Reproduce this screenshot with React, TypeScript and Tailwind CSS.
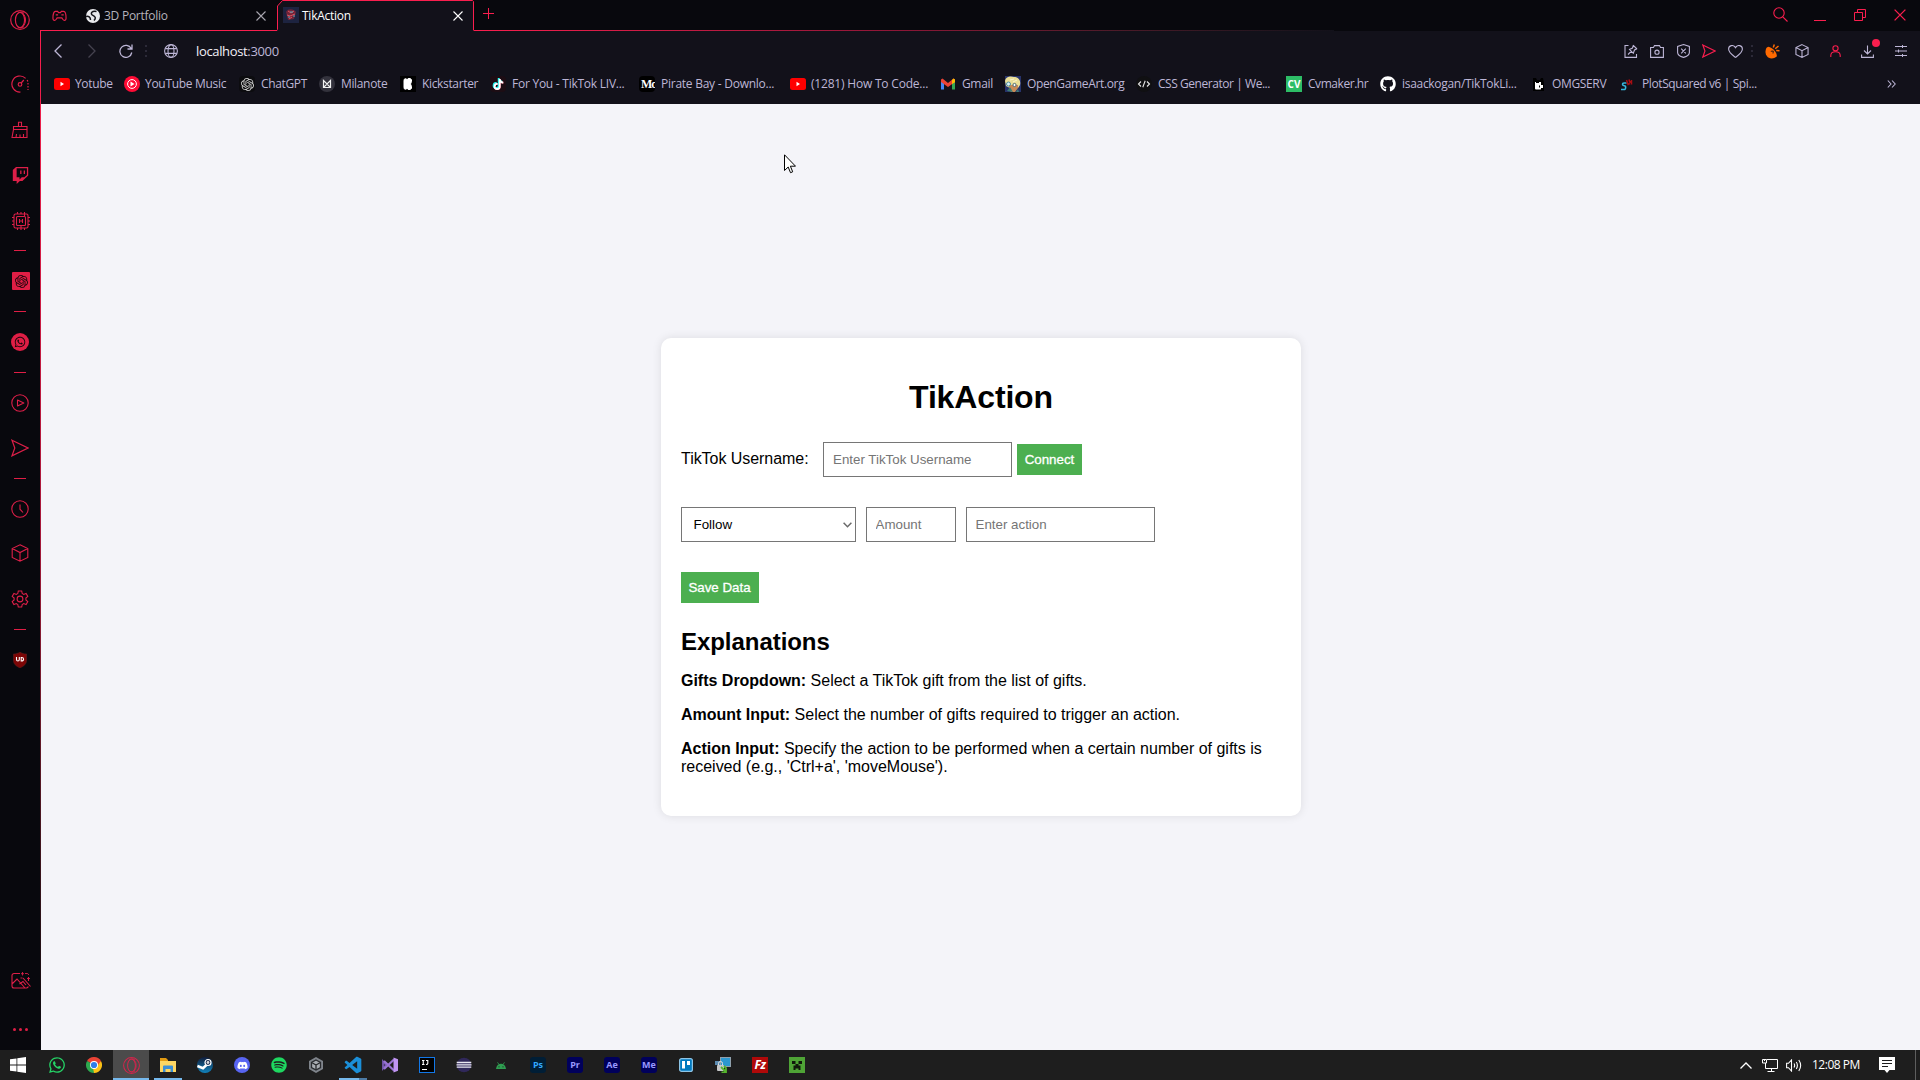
import React from "react";
import { FaWhatsapp, FaTwitch, FaTiktok, FaGithub, FaDiscord, FaSpotify } from "react-icons/fa6";
import { SiOpenai } from "react-icons/si";
import { BiLogoVisualStudio } from "react-icons/bi";

type IconProps = { w?: number; h?: number; vb?: string; sw?: number; className?: string; children: React.ReactNode };

/** Outline icon drawn with the current text colour. */
function Line({ w = 18, h, vb = "0 0 18 18", sw = 1.1, className = "", children }: IconProps) {
  return (
    <svg
      width={w}
      height={h ?? w}
      viewBox={vb}
      fill="none"
      stroke="currentColor"
      strokeWidth={sw}
      className={"block shrink-0 " + className}
    >
      {children}
    </svg>
  );
}

const OperaRing = ({ size = 20 }: { size?: number }) => (
  <Line w={size} vb="0 0 20 20" sw={1.2}>
    <circle cx="10" cy="10" r="9.3" />
    <ellipse cx="10" cy="10" rx="4.6" ry="7.6" />
    <path d="M7.5 3.6C9 2 12 1.600 14 3.300M7.500 16.400C9 18 12 18.400 14 16.700M12.500 3.200c4 3 4 10.600 0 13.600" strokeWidth="1" />
  </Line>
);

const Cube = ({ size = 18 }: { size?: number }) => (
  <Line w={size} sw={size < 18 ? 1.4 : 1.1}>
    <path d="M9 .8L16.800 4.600V13.400L9 17.200L1.200 13.400V4.600ZM1.200 4.600L9 8.600L16.800 4.600M9 8.600V17.200" />
  </Line>
);

const SendIcon = ({ size = 18 }: { size?: number }) => (
  <Line w={size} sw={size < 18 ? 1.5 : 1.2}>
    <path d="M1 1.200L17 9L1 16.800L3.800 9Z" />
  </Line>
);

const Dash = () => <div className="h-px w-3 bg-[#e01e45]" />;

function Sidebar() {
  return (
    <aside className="flex h-[1050px] w-10 shrink-0 flex-col bg-[#08080d] text-[#dd1f48]">
      <div className="flex h-[39px] items-center justify-center"><OperaRing /></div>
      <div className="mt-[22px] flex h-[46px] items-center justify-center pr-px">
        <Line sw={1.2}>
          <path d="M14.600 3.400A8 8 0 1 0 9.500 17M10.200 8L12.800 5" />
          <path d="M17 8v7" strokeDasharray="1.500 1.500" />
          <path d="M16.800 6.500L16.200 5" />
          <circle cx="9" cy="9.400" r="1.800" />
        </Line>
      </div>
      <div className="flex h-[46px] items-center justify-center">
        <Line>
          <path d="M7.500 5.500V1.200h3v4.300M2.500 5.500h13.500v3H2.500ZM2.500 8.500L1 16.500h15V8.500M5 16.500l.5-3.500M9 16.500v-3M12.500 16.500v-3.500" />
        </Line>
      </div>
      <div className="flex h-[45px] items-center justify-center"><FaTwitch size={17} /></div>
      <div className="flex h-[46px] items-center justify-center pl-0.5">
        <Line>
          <rect x="2" y="2" width="14" height="14" rx="1.500" />
          <rect x="4.500" y="4.500" width="9" height="9" rx="1" />
          <path d="M7.500 7v4M10.500 7v4M7.500 9h3M5.500 2V0M9 2V0M12.500 4.500V0M5.500 18v-2M9 18v-4M12.500 18v-2M0 5.500h2M0 9h2M0 12.500h2M16 5.500h2M16 9h2M16 12.500h2" />
        </Line>
      </div>
      <div className="flex h-[13px] items-center justify-center"><Dash /></div>
      <div className="flex h-12 items-center justify-center pl-0.5">
        <div className="flex size-[18px] items-center justify-center rounded-[1px] bg-[#e01e45] text-[#1a060c]"><SiOpenai size={13} /></div>
      </div>
      <div className="flex h-3 items-center justify-center"><Dash /></div>
      <div className="flex h-[50px] items-center justify-center">
        <div className="flex size-[18px] items-center justify-center rounded-full bg-[#e01e45] text-[#1a060c]"><FaWhatsapp size={12} /></div>
      </div>
      <div className="flex h-2.5 items-center justify-center"><Dash /></div>
      <div className="flex h-[51px] items-center justify-center pr-px">
        <Line><circle cx="9" cy="9" r="8.200" /><path d="M6.500 6L12.800 9L6.500 12Z" strokeLinejoin="round" /></Line>
      </div>
      <div className="flex h-10 items-center justify-center pr-px"><SendIcon /></div>
      <div className="flex h-5 items-center justify-center"><Dash /></div>
      <div className="flex h-[41px] items-center justify-center pr-px">
        <Line><circle cx="9" cy="9" r="8.200" /><path d="M9 4.500V9.200L12 12.500" /></Line>
      </div>
      <div className="flex h-12 items-center justify-center pr-px"><Cube /></div>
      <div className="flex h-[43px] items-center justify-center pr-px">
        <Line>
          <circle cx="9" cy="9" r="2.900" />
          <path d="M7.300 1h3.400l.5 2.500 1.500.9 2.400-.9 1.700 2.900-1.900 1.700v1.800l1.900 1.700-1.700 2.900-2.400-.9-1.500.9-.5 2.500H7.300l-.5-2.500-1.500-.9-2.400.9-1.700-2.900 1.900-1.700V8.100L1.200 6.400l1.700-2.900 2.400.9 1.500-.9Z" />
        </Line>
      </div>
      <div className="flex h-[18px] items-center justify-center"><Dash /></div>
      <div className="flex h-11 items-center justify-center">
        <svg width="14" height="16" viewBox="0 0 14 16" className="block">
          <path d="M7 0C9 1.500 11 2 13.600 2V8C13.600 12 11 14 7 16C3 14 .4 12 .4 8V2C3 2 5 1.500 7 0Z" fill="#7d0606" stroke="#5b2020" strokeWidth=".6" />
          <path d="M3.500 5v2.500q0 1.500 1.400 1.500T6.300 7.500V5" fill="none" stroke="#fff" strokeWidth="1.100" />
          <path d="M8.200 5.500v3.500h.6a1.750 1.750 0 0 0 0-3.500Z" fill="none" stroke="#fff" strokeWidth="1.100" />
        </svg>
      </div>
      <div className="flex-1" />
      <div className="flex h-10 items-center justify-center pl-0.5">
        <Line w={20} vb="0 0 20 18" h={18} className="relative top-px">
          <path d="M9 1.500H3A2 2 0 0 0 1 3.500V14A2 2 0 0 0 3 16H15.500A2 2 0 0 0 17.300 14.500M1 12L6 7L14 16M8.500 12L12 9.500L15 13M12 6L19.500 14.500M17.500 9V5" />
          <path d="M11.500 0v3.500M10 1.700h3M14 1.500h2.500a1.500 1.500 0 0 1 1 1.500M9.500 6h2M16 6.500h3" strokeWidth=".9" />
        </Line>
      </div>
      <div className="mt-[19px] flex h-6 items-center justify-center gap-[3px] pb-[3px]">
        <i className="size-[3px] rounded-full bg-[#e01e45]" />
        <i className="size-[3px] rounded-full bg-[#e01e45]" />
        <i className="size-[3px] rounded-full bg-[#e01e45]" />
      </div>
      <div className="h-[7px]" />
    </aside>
  );
}

const Cross = ({ size = 10, className = "" }: { size?: number; className?: string }) => (
  <Line w={size} vb="0 0 10 10" className={className}><path d="M.5 .5L9.500 9.500M9.500 .5L.5 9.500" /></Line>
);

function TabStrip() {
  return (
    <div className="relative flex h-[31px] w-full bg-[#08080d]">
      <div className="flex h-[31px] w-9 items-center justify-center text-[#dd1f48]">
        <Line w={15} h={12} vb="0 0 16 12" sw={1.3}>
          <path d="M3.500 1H6L7 2.300H9L10 1H12.500C14 1 15 4.500 15 8.500C15 11 12.800 11.500 11.500 9.500L10.500 8H5.500L4.500 9.500C3.200 11.500 1 11 1 8.500C1 4.500 2 1 3.500 1Z" />
          <path d="M4 4.700h2.500M10 4.700h2.500" />
        </Line>
      </div>
      <div className="flex h-[31px] w-[200px] items-center pl-[9px]">
        <svg width="14" height="14" viewBox="0 0 14 14" className="block">
          <circle cx="7" cy="7" r="7" fill="#e8e9ec" />
          <path d="M10.500 2.500C6 1.500 4 4.500 6.500 6.200C9 7.500 10.500 8.500 8 11.500M0 7.500C2.500 6.500 4.500 8.500 4.500 11" fill="none" stroke="#15151b" strokeWidth="1.500" />
        </svg>
        <span className="ml-1 w-[152px] whitespace-nowrap text-[12px] tracking-[-0.25px] text-[#b5b3bb]">3D Portfolio</span>
        <Cross className="text-[#a9a7b0]" />
      </div>
      <div className="relative flex h-[31px] w-[197px] items-center pl-1.5">
        <svg width="198" height="31" viewBox="0 0 198 31" className="absolute left-0 top-0 block">
          <path d="M.5 31V6L5.500 .5H196.500V31Z" fill="#12111a" />
          <path d="M0 30.500L.5 29.500V6L5.500 .5H195.500L196.500 1.500V30.500" fill="none" stroke="#fa1e4e" />
        </svg>
        <svg width="16" height="16" viewBox="0 0 16 16" className="relative -top-px block">
          <rect width="16" height="16" fill="#1d2340" />
          <path d="M3 5C5 1 11 2 13 5L11 12L5 13Z" fill="#6f2439" />
          <path d="M5 4L8 6L11 4M4 8L7 9L12 7M6 12L9 10" stroke="#e0525e" fill="none" />
          <path d="M7 5h3M5 10h2M10 9h2" stroke="#53a8c0" />
        </svg>
        <span className="relative ml-[3px] w-[151px] whitespace-nowrap text-[12px] tracking-[-0.25px] text-white">TikAction</span>
        <Cross className="relative text-white" />
      </div>
      <div className="flex h-[27px] w-7 items-center justify-center text-[#fa1e4e]">
        <Line w={11} vb="0 0 11 11" sw={1}><path d="M5.500 0V11M0 5.500H11" /></Line>
      </div>
      <div className="flex-1" />
      <div className="flex h-[30px] w-40 text-[#fa1e4e]">
        <div className="flex w-10 items-center justify-center pb-0.5">
          <Line w={15} vb="0 0 15 15" sw={1.1}><circle cx="6" cy="6" r="5.200" /><path d="M9.800 9.800L14.500 14.500" /></Line>
        </div>
        <div className="flex w-10 items-center justify-center pt-[11px]"><div className="h-px w-3 bg-[#fa1e4e]" /></div>
        <div className="flex w-10 items-center justify-center">
          <Line w={12} vb="0 0 12 12" sw={1}><path d="M.5 3.500h8v8h-8ZM3.500 3.500V.5h8v8H8.500" /></Line>
        </div>
        <div className="flex w-10 items-center justify-center"><Cross size={12} /></div>
      </div>
      <div className="absolute bottom-0 left-0 h-px w-[236px] bg-[#fa1e4e]" />
      <div className="absolute bottom-0 left-[433px] h-px w-[860px] bg-gradient-to-r from-[#fa1e4e] via-[#8b1636] to-[#12111a]" />
    </div>
  );
}

const Dots = () => (
  <div className="flex flex-col gap-[3px]">
    <i className="block size-0.5 bg-[#2c2a38]" />
    <i className="block size-0.5 bg-[#2c2a38]" />
    <i className="block size-0.5 bg-[#2c2a38]" />
  </div>
);

function Toolbar() {
  return (
    <div className="flex h-10 items-center text-[#bdb6d6]">
      <div className="flex w-[34px] justify-center"><Line w={8} h={14} vb="0 0 8 14" sw={1.3}><path d="M7.500 .5L1 7L7.500 13.500" /></Line></div>
      <div className="flex w-[34px] justify-center text-[#45424f]"><Line w={8} h={14} vb="0 0 8 14" sw={1.3}><path d="M.5 .5L7 7L.5 13.500" /></Line></div>
      <div className="flex w-[33px] justify-center">
        <Line w={14} vb="0 0 14 14" sw={1.3}><path d="M12.200 4.500A6 6 0 1 0 12.800 8.500M13 .5V5H8.500" /></Line>
      </div>
      <div className="flex w-2 justify-center"><Dots /></div>
      <div className="flex w-[41px] justify-center">
        <Line w={14} vb="0 0 14 14"><circle cx="7" cy="7" r="6.400" /><ellipse cx="7" cy="7" rx="3" ry="6.400" /><path d="M1.300 4.600H12.700M1.300 9.400H12.700" /></Line>
      </div>
      <span className="ml-[5px] whitespace-nowrap pt-0.5 text-[13px] tracking-[-0.35px]">
        <span className="text-[#f2f0f8]">localhost</span>:3000
      </span>
      <div className="flex-1" />
      <div className="flex w-[26px] justify-center">
        <Line w={14} vb="0 0 14 14"><path d="M4.500 1.500H1V13.400H12.500V10M9 1.200L13 5M9.300 1.500L8.500 4L5.500 5.500L9.300 9.300L10.500 6L13 4.700M7.200 7.400L4 10.500" /></Line>
      </div>
      <div className="flex w-[26px] justify-center">
        <Line w={14} h={13} vb="0 0 14 13"><path d="M.6 2.500H3.500L4.500 .6H9.500L10.500 2.500H13.400V12.400H.6Z" /><circle cx="7" cy="7.200" r="2.100" /></Line>
      </div>
      <div className="flex w-[26px] justify-center">
        <Line w={13} h={14} vb="0 0 13 14"><path d="M6.500 .6L12.400 2.500V8.500C12.400 11 9.500 12.500 6.500 13.400C3.500 12.500 .6 11 .6 8.500V2.500ZM4.200 4.700L8.800 9.300M8.800 4.700L4.200 9.300" /></Line>
      </div>
      <div className="flex w-[26px] justify-center text-[#fa1e4e]"><SendIcon size={14} /></div>
      <div className="flex w-[26px] justify-center">
        <Line w={15} h={13} vb="0 0 15 13"><path d="M7.500 12.400C4 9.800 .6 7.500 .6 4C.6 .3 5.500 -.8 7.500 2.600C9.500 -.8 14.400 .3 14.400 4C14.400 7.500 11 9.800 7.500 12.400Z" /></Line>
      </div>
      <div className="flex w-2 justify-center"><Dots /></div>
      <div className="flex w-[29px] justify-center pl-[3px]">
        <svg width="15" height="15" viewBox="0 0 15 15" className="block">
          <path d="M1.800 3.500C-1 7.500 .8 14.500 6.500 14.500C9 14.500 11 13.500 11.800 12Z" fill="#ff6a00" />
          <ellipse cx="6.800" cy="7.800" rx="2.800" ry="6.500" transform="rotate(-45 6.800 7.800)" fill="#ff6a00" />
          <path d="M5.800 7.300L8.300 7L8 9.500" fill="none" stroke="#12111a" strokeWidth=".9" />
          <path d="M8.300 3.500L9.300 .5M10.200 4.800L13.500 2M11.200 6.600L14.500 6.800" stroke="#ff6a00" strokeWidth="1.500" />
        </svg>
      </div>
      <div className="flex w-[33px] justify-center"><Cube size={14} /></div>
      <div className="flex w-[34px] justify-center text-[#fa1e4e]">
        <Line w={11} h={12} vb="0 0 11 12"><circle cx="5.500" cy="3.300" r="2.600" /><path d="M.8 12V10.500C.8 8 3 6.800 5.500 6.800S10.200 8 10.200 10.500V12" /></Line>
      </div>
      <div className="relative flex w-[31px] justify-center">
        <Line w={13} h={13} vb="0 0 13 13"><path d="M6.500 .5V8.500M3 5.500L6.500 9L10 5.500M.6 9.500V12.400H12.400V9.500" /></Line>
        <i className="absolute -top-[6px] left-[20px] size-2 rounded-full bg-[#fa1e4e]" />
      </div>
      <div className="flex w-[36px] justify-center">
        <Line w={12} h={12} vb="0 0 12 12" sw={1}><path d="M0 1.500H12M0 6H12M0 10.500H12M7.500 0V3M3.500 4.500V7.500M7.500 9V12" /></Line>
      </div>
      <div className="w-px" />
    </div>
  );
}

const bookmarkIcons: Record<string, React.ReactNode> = {
  yt: (
    <svg width="16" height="12" viewBox="0 0 16 12"><rect width="16" height="12" rx="2.500" fill="#f00" /><path d="M6.500 3.800V8.200L10 6Z" fill="#fff" /></svg>
  ),
  ytm: (
    <svg width="16" height="16" viewBox="0 0 16 16"><circle cx="8" cy="8" r="8" fill="#ff0b35" /><circle cx="8" cy="8" r="4.400" fill="none" stroke="#fff" /><path d="M6.500 5.500V10.500L10.500 8Z" fill="#fff" /></svg>
  ),
  gpt: <div className="flex size-4 items-center justify-center rounded-sm bg-[#0c0c0f] text-[#d5d5d5]"><SiOpenai size={13} /></div>,
  mil: (
    <svg width="16" height="16" viewBox="0 0 16 16"><circle cx="8" cy="8" r="8" fill="#33323c" /><path d="M4.500 11.500V4.500L8 8L11.500 4.500V11.500ZM4.500 11.500L8 8L11.500 11.500" fill="none" stroke="#f1f1f1" strokeWidth="1.200" /></svg>
  ),
  kick: (
    <svg width="16" height="16" viewBox="0 0 16 16"><rect width="16" height="16" fill="#000" /><path d="M4 4.500a1.500 1.500 0 0 1 3-.5 2.300 2.300 0 0 1 4.500 1.500L10.500 8l1 2.500a2.300 2.300 0 0 1-4.500 1.500 1.500 1.500 0 0 1-3-.5Z" fill="#fff" stroke="#fff" /></svg>
  ),
  tt: (
    <div className="relative flex size-4 items-center justify-center rounded bg-[#1d0d14] text-white">
      <FaTiktok size={11} className="absolute left-[3px] top-[3px] text-[#fe2c55]" />
      <FaTiktok size={11} className="absolute left-[2px] top-[2px] text-[#25f4ee]" />
      <FaTiktok size={11} className="relative" />
    </div>
  ),
  mc: (
    <div className="flex size-4 items-center overflow-hidden rounded-sm bg-black pl-0.5 font-['Liberation_Serif',serif] text-[12px] font-bold tracking-[-1px] text-white">
      Mc
    </div>
  ),
  gmail: (
    <svg width="14" height="12" viewBox="0 0 14 12"><path d="M0 2V11.500H3V5Z" fill="#4285f4" /><path d="M14 2V11.500H11V5Z" fill="#34a853" /><path d="M0 1.500L1.500 .5L7 5L12.500 .5L14 1.500V4L7 9L0 4Z" fill="#ea4335" /><path d="M11 2L12.500 .5L14 1.500V4.200L11 6Z" fill="#fbbc04" /></svg>
  ),
  oga: (
    <svg width="16" height="16" viewBox="0 0 16 16"><rect width="16" height="16" fill="#27336b" /><path d="M0 5C1 0 6 0 9 1C14 1 16 5 15 9L13 12H5L1 10Z" fill="#eade96" /><path d="M4 9h9v3l-3 4H6l-2-3Z" fill="#c98a55" /><circle cx="3.500" cy="8" r="2" fill="#d9f1f5" stroke="#4d8ea1" /><circle cx="9.500" cy="9" r="1.600" fill="#fff" stroke="#4d6a75" /><path d="M2 15l3-4 3 5ZM11 16l2-3 1 3Z" fill="#3c7b74" /><path d="M5 4l4-1M8 6l4-2" stroke="#fbf6cf" /></svg>
  ),
  css: (
    <svg width="16" height="16" viewBox="0 0 16 16"><circle cx="8" cy="8" r="8" fill="#101012" /><path d="M5 5.500L2.500 8L5 10.500M11 5.500L13.500 8L11 10.500M9.200 4.800L6.800 11.200" fill="none" stroke="#e6e6e6" strokeWidth="1.100" /></svg>
  ),
  cv: <div className="flex size-4 items-center justify-center bg-[#2dbd66] text-[10px] font-bold text-white">CV</div>,
  gh: <FaGithub size={16} className="text-white" />,
  omg: (
    <svg width="16" height="16" viewBox="0 0 16 16"><path d="M3 2h3l1 2h3l1-2h2l1 5v8H3Z" fill="#000" /><path d="M5 6h1v1h3V6h2v3h2v3h-2v1q0 .5-1 .5H6q-1 0-1-1Z" fill="#fff" /><path d="M9.500 9.500v2" stroke="#000" /></svg>
  ),
  plot: (
    <svg width="16" height="16" viewBox="0 0 16 16"><path d="M6.500 7H4Q2.500 7 2.500 8.300T4.200 9.700T5.600 11.800T4 13.500H1" fill="none" stroke="#35b7dd" strokeWidth="1.600" /><path d="M6.500 4L8 8.500L10 7.500M9 3.500L9.800 6.500M11.500 4V8.500M9.500 6.500L12 5" fill="none" stroke="#a70d12" strokeWidth="1.500" /></svg>
  ),
};

const bookmarks = [
  { icon: "yt", text: "Yotube", cell: "w-[70px] gap-[5px]", track: "tracking-[-0.35px]" },
  { icon: "ytm", text: "YouTube Music", cell: "w-[115px] gap-[5px]", track: "tracking-[-0.3px]" },
  { icon: "gpt", text: "ChatGPT", cell: "w-[80px] gap-1.5", track: "tracking-[-0.35px]" },
  { icon: "mil", text: "Milanote", cell: "w-[81px] gap-1.5", track: "tracking-[-0.35px]" },
  { icon: "kick", text: "Kickstarter", cell: "w-[90px] gap-1.5", track: "tracking-[-0.35px]" },
  { icon: "tt", text: "For You - TikTok LIV...", cell: "w-[149px] gap-1.5", track: "tracking-[-0.25px]" },
  { icon: "mc", text: "Pirate Bay - Downlo...", cell: "w-[151px] gap-1.5", track: "tracking-[-0.25px]" },
  { icon: "yt", text: "(1281) How To Code...", cell: "w-[150px] gap-[5px]", track: "tracking-[-0.2px]" },
  { icon: "gmail", text: "Gmail", cell: "w-[65px] gap-1.5", track: "tracking-[-0.35px]" },
  { icon: "oga", text: "OpenGameArt.org", cell: "w-[131px] gap-1.5", track: "tracking-[-0.35px]" },
  { icon: "css", text: "CSS Generator | We...", cell: "w-[150px] gap-1.5", track: "tracking-[-0.45px]" },
  { icon: "cv", text: "Cvmaker.hr", cell: "w-[94px] gap-1.5", track: "tracking-[-0.45px]" },
  { icon: "gh", text: "isaackogan/TikTokLi...", cell: "w-[150px] gap-1.5", track: "tracking-[-0.3px]" },
  { icon: "omg", text: "OMGSERV", cell: "w-[90px] gap-1.5", track: "tracking-[-0.35px]" },
  { icon: "plot", text: "PlotSquared v6 | Spi...", cell: "w-[150px] gap-1.5", track: "tracking-[-0.4px]" },
];

function Bookmarks() {
  return (
    <div className="flex h-[33px] items-center pb-[7px] pl-[13px] text-[#bdb6d6]">
      {bookmarks.map((b) => (
        <div key={b.text} className={"flex shrink-0 items-center " + b.cell}>
          <div className="flex size-4 shrink-0 items-center justify-center">{bookmarkIcons[b.icon]}</div>
          <span className={"whitespace-nowrap text-[12px] leading-4 " + b.track}>{b.text}</span>
        </div>
      ))}
      <div className="flex-1" />
      <Line w={9} h={8} vb="0 0 9 8" sw={1.1} className="mr-6"><path d="M.8 .5L4 4L.8 7.500M5 .5L8.200 4L5 7.500" /></Line>
    </div>
  );
}

const field = "border border-[#767676] bg-white text-[13.333px] placeholder-[#757575] outline-none h-[35px]";

function TikActionCard() {
  return (
    <div className="h-[478px] w-[640px] rounded-[10px] bg-white px-5 pt-[41px] shadow-[0_0_10px_rgba(0,0,0,0.1)]">
      <h1 className="text-center text-[32px] font-bold leading-[37px] tracking-[-0.15px]">TikAction</h1>
      <div className="mt-[26px] flex h-[35px] items-center">
        <label className="w-[142px] pb-0.5 text-[16px] leading-[18px] tracking-[-0.05px]">TikTok Username:</label>
        <input className={field + " w-[189px] px-[9px]"} placeholder="Enter TikTok Username" />
        <button className="ml-[5px] h-[31px] w-[65px] bg-[#4caf50] text-[13.333px] font-medium text-white [-webkit-text-stroke:0.3px_white]">Connect</button>
      </div>
      <div className="mt-[30px] flex gap-2.5">
        <div className="relative">
          <select className={field + " w-[175px] appearance-none pl-[11.500px]"}><option>Follow</option></select>
          <Line w={9} h={6} vb="0 0 9 6" sw={1.500} className="absolute right-[4px] top-[15px] text-[#6a6a6a]"><path d="M.6 .8L4.500 4.700L8.400 .8" /></Line>
        </div>
        <input className={field + " w-[90px] px-[8.500px]"} placeholder="Amount" />
        <input className={field + " w-[189px] px-[8.500px]"} placeholder="Enter action" />
      </div>
      <button className="mt-[30px] block h-[31px] w-[78px] bg-[#4caf50] pr-px text-[13.333px] font-medium text-white [-webkit-text-stroke:0.3px_white]">Save Data</button>
      <h2 className="mt-[25px] text-[24px] font-bold leading-7 tracking-[-0.05px]">Explanations</h2>
      <div className="mt-4 flex flex-col gap-4 text-[16px] leading-[18px] tracking-[-0.01px]">
        <p><strong>Gifts Dropdown:</strong> Select a TikTok gift from the list of gifts.</p>
        <p><strong>Amount Input:</strong> Select the number of gifts required to trigger an action.</p>
        <p><strong>Action Input:</strong> Specify the action to be performed when a certain number of gifts is received (e.g., 'Ctrl+a', 'moveMouse').</p>
      </div>
    </div>
  );
}

const adobe = "flex size-4 items-center justify-center rounded-[3px] text-[9px] font-bold";

const apps: { id: string; icon: React.ReactNode; open?: string }[] = [
  { id: "whatsapp", icon: <FaWhatsapp size={18} className="text-[#25d366]" /> },
  {
    id: "chrome",
    icon: (
      <svg width="16" height="16" viewBox="0 0 16 16">
        <path d="M8 8L1.070 4A8 8 0 0 1 14.930 4Z" fill="#ea4335" />
        <path d="M8 8L14.930 4A8 8 0 0 1 8 16Z" fill="#fbc116" />
        <path d="M8 8V16A8 8 0 0 1 1.070 4Z" fill="#2da94f" />
        <path d="M8 4H14.930L12 8Z" fill="#ea4335" /><path d="M11.500 10L8 16L7 11Z" fill="#fbc116" />
        <circle cx="8" cy="8" r="4" fill="#fff" /><circle cx="8" cy="8" r="3.100" fill="#2f7de9" />
      </svg>
    ),
  },
  { id: "opera", icon: <div className="text-[#d0264c]"><OperaRing size={17} /></div>, open: "w-9" },
  {
    id: "explorer",
    open: "w-7",
    icon: (
      <svg width="16" height="15" viewBox="0 0 16 15"><path d="M0 0H6L8 2V4H0Z" fill="#e29b12" /><path d="M0 3H16V14H0Z" fill="#fdd663" /><path d="M3 14V8.500Q3 7.500 4 7.500H12Q13 7.500 13 8.500V14H10.500V11H5.500V14Z" fill="#3c8fd6" /></svg>
    ),
  },
  {
    id: "steam",
    icon: (
      <svg width="16" height="16" viewBox="0 0 16 16"><defs><linearGradient id="st" x1="0" y1="0" x2="0" y2="1"><stop offset="0" stopColor="#111d3a" /><stop offset="1" stopColor="#1183bd" /></linearGradient></defs><circle cx="8" cy="8" r="8" fill="url(#st)" /><path d="M.4 9L6 11.300L10.500 7" stroke="#fff" strokeWidth="2.600" fill="none" /><circle cx="11" cy="5.500" r="3" fill="#17284a" stroke="#fff" strokeWidth="1.200" /><circle cx="11" cy="5.500" r="1.400" fill="#ddd" /></svg>
    ),
  },
  { id: "discord", icon: <div className="flex size-4 items-center justify-center rounded-full bg-[#5865f2] text-white"><FaDiscord size={11} /></div> },
  { id: "spotify", icon: <FaSpotify size={16} className="text-[#1ed760]" /> },
  {
    id: "unity",
    icon: (
      <svg width="16" height="16" viewBox="0 0 16 16"><path d="M8 0L15 4V12L8 16L1 12V4Z" fill="#7f848b" /><path d="M8 3L12.500 5.500V10.500L8 13L3.500 10.500V5.500Z" fill="#a9adb3" stroke="#2a2c30" strokeWidth="1.300" /><path d="M8 8V12.500M8 8L4 5.800M8 8L12 5.800" stroke="#25272a" strokeWidth="1.300" /></svg>
    ),
  },
  { id: "code", icon: <BiLogoVisualStudio size={20} className="text-[#1b8fd8]" />, open: "w-7 border-r-8 border-[#4d7ba5]" },
  {
    id: "vs",
    icon: (
      <svg width="16" height="16" viewBox="0 0 16 16"><path d="M1 4.500V11.500L4 8Z" fill="none" stroke="#7a5bb5" strokeWidth="1.800" /><path d="M2 4L12 13.500M2 12L12 2.500" stroke="#9a73d4" strokeWidth="2.200" /><path d="M11.500 .5L16 2.200V13.800L11.500 15.500Z" fill="#c195f3" /></svg>
    ),
  },
  {
    id: "idea",
    icon: (
      <svg width="16" height="16" viewBox="0 0 16 16"><rect x=".5" y=".5" width="15" height="15" fill="#000" stroke="#1278e8" /><path d="M3 3.500H5.500M4.250 3.500V7.500M3 7.500H5.500M7 3.500H8.800V6.500Q8.800 7.500 7 7.500M3 12.500H8" fill="none" stroke="#fff" strokeWidth="1.100" /></svg>
    ),
  },
  {
    id: "eclipse",
    icon: (
      <svg width="16" height="16" viewBox="0 0 16 16"><circle cx="8" cy="8" r="7.300" fill="#30285a" /><path d="M.7 5.500H15.300M.5 7.800H15.500M.7 10.100H15.300" stroke="#e9e8f2" strokeWidth="1.300" /></svg>
    ),
  },
  {
    id: "android",
    icon: (
      <svg width="10" height="7" viewBox="0 0 10 7"><path d="M1.500 .3L3 2.500M8.500 .3L7 2.500" stroke="#2f9e51" strokeWidth=".8" /><path d="M0 7C.5 0 9.500 0 10 7Z" fill="#2f9e51" /><circle cx="3" cy="4.800" r=".6" fill="#1e1e1e" /><circle cx="7" cy="4.800" r=".6" fill="#1e1e1e" /></svg>
    ),
  },
  { id: "ps", icon: <div className={adobe + " bg-[#001e36] text-[#31a8ff]"}>Ps</div> },
  { id: "pr", icon: <div className={adobe + " bg-[#00005b] text-[#9999ff]"}>Pr</div> },
  { id: "ae", icon: <div className={adobe + " bg-[#00005b] text-[#9999ff]"}>Ae</div> },
  { id: "me", icon: <div className={adobe + " bg-[#00005b] text-[#9999ff]"}>Me</div> },
  {
    id: "trello",
    icon: (
      <svg width="14" height="14" viewBox="0 0 14 14"><rect x=".6" y=".6" width="12.800" height="12.800" rx="2" fill="#0079bf" stroke="#8ec5e6" strokeWidth="1.200" /><path d="M3 3H6V10.500H3ZM8 3H11V7H8Z" fill="#fff" /></svg>
    ),
  },
  {
    id: "winscp",
    icon: (
      <svg width="16" height="16" viewBox="0 0 16 16"><path d="M5 0H16V10H5Z" fill="#8fa0ac" /><path d="M6 1H15V9H6Z" fill="#2c97cf" /><path d="M0 4H5V8H0Z" fill="#5b8bb0" /><rect x="2" y="8" width="7" height="6" rx="1" fill="#c6c8c9" /><path d="M3.500 8V6.500a2 2 0 0 1 4 0V8" fill="none" stroke="#ddd" /><path d="M6 10L11 15V11L9 9M11 15.500H6.500" stroke="#55b52c" strokeWidth="1.800" fill="none" /></svg>
    ),
  },
  {
    id: "filezilla",
    icon: (
      <div className="flex size-4 items-center justify-center bg-[#b00909] text-[12px] font-bold italic leading-4 tracking-[-0.5px] text-white">Fz</div>
    ),
  },
  {
    id: "creeper",
    icon: (
      <svg width="16" height="16" viewBox="0 0 16 16"><rect width="16" height="16" fill="#4fa436" /><path d="M3 4H6.500V7H9.500V4H13V7H9.500V8.500H11.500V13H9.500V11.500H6.500V13H4.500V8.500H6.500V7H3Z" fill="#10190c" /></svg>
    ),
  },
];

function Taskbar() {
  return (
    <footer className="flex h-[30px] items-stretch bg-[#1e1e1e] text-white">
      <div className="flex w-[38px] items-center justify-center pr-0.5">
        <svg width="16" height="16" viewBox="0 0 16 16"><path d="M0 2.300L6.500 1.400V7.500H0ZM7.300 1.300L16 0V7.500H7.300ZM0 8.400H6.500V14.600L0 13.700ZM7.300 8.400H16V16L7.300 14.700Z" fill="#fff" /></svg>
      </div>
      {apps.map((a) => (
        <div key={a.id} className={"relative ml-px flex w-9 items-center justify-center " + (a.id === "opera" ? "bg-[#4b4b4b]" : "")}>
          {a.icon}
          {a.open && (
            <div className="absolute inset-x-0 bottom-0 flex justify-center">
              <div className={"h-0.5 bg-[#76b9ed] " + a.open} />
            </div>
          )}
        </div>
      ))}
      <div className="flex-1" />
      <div className="flex items-center">
        <Line w={12} h={7} vb="0 0 12 7" sw={1.300}><path d="M.5 6.500L6 1L11.500 6.500" /></Line>
        <Line w={16} h={14} vb="0 0 16 14" sw={1} className="ml-[10px]"><path d="M5 1.500H15.500V10.500H3.500V5M9.500 10.500V13M5.500 13.500H12.500M.5 1.500H4.500V5H.5ZM2.500 1.500V3" /></Line>
        <Line w={16} h={13} vb="0 0 16 13" sw={1.100} className="ml-2"><path d="M.6 4.300H2.500L5.500 1V12L2.500 8.700H.6ZM8 4.500Q9.300 6.500 8 8.500M10.300 3Q12.500 6.500 10.300 10M12.800 1Q16.500 6.500 12.800 12" /></Line>
        <span className="ml-2.5 w-12 whitespace-nowrap text-[12px] tracking-[-0.5px]">12:08 PM</span>
        <svg width="16" height="16" viewBox="0 0 16 16" className="ml-[19px]"><path d="M0 0H16V13H10.500L8 16L5.500 13H0Z" fill="#fff" /><path d="M3 3.500H13M3 6.500H13M3 9.500H9" stroke="#1e1e1e" /></svg>
        <div className="ml-5 mr-1 h-[30px] w-px bg-[#5e5e5e]" />
      </div>
    </footer>
  );
}

export default function App() {
  return (
    <div className="relative h-[1080px] w-[1920px] overflow-hidden bg-[#f4f4f9] font-['Open_Sans','Noto_Sans',sans-serif]">
      <div className="flex h-[1050px]">
        <Sidebar />
        <div className="flex w-px shrink-0 flex-col bg-[#08080d]">
          <div className="h-[30px]" />
          <div className="flex-1 bg-gradient-to-b from-[#fa1e4e] via-[#a5183a] to-[#08080d]" />
        </div>
        <div className="flex min-w-0 flex-1 flex-col">
          <header className="h-[104px] bg-[#12111a]">
            <TabStrip />
            <Toolbar />
            <Bookmarks />
          </header>
          <main className="flex flex-1 items-center justify-center bg-[#f4f4f9] pl-px font-['Liberation_Sans',Arial,sans-serif] text-black">
            <TikActionCard />
          </main>
        </div>
      </div>
      <Taskbar />
      <svg width="12" height="20" viewBox="0 0 12 20" className="absolute left-[784px] top-[154px]">
        <path d="M.5 .8V16.500L4.200 13L6.500 18.700L8.700 17.800L6.400 12.200H11.500Z" fill="#fff" stroke="#000" />
      </svg>
    </div>
  );
}
